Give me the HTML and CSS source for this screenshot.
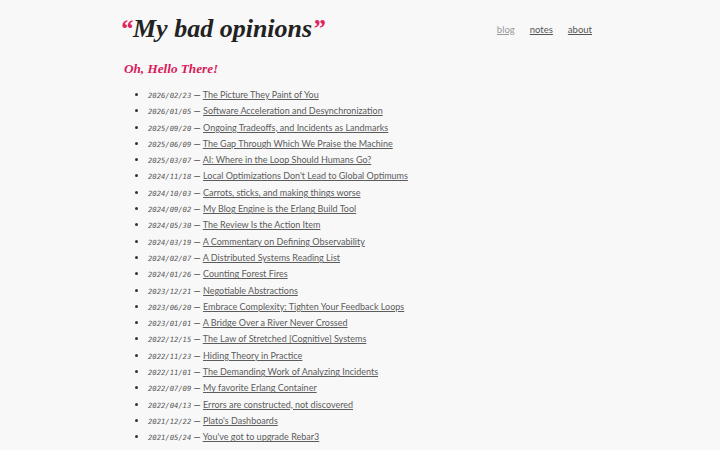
FILE: index.html
```html
<!DOCTYPE html>
<html>
<head>
<meta charset="utf-8">
<link rel="stylesheet" href="styles.css">
</head>
<body>
<div class="page">
  <header class="header">
    <h1 class="title"><span class="quote">“</span>My bad opinions<span class="quote">”</span></h1>
    <nav class="nav">
      <a class="nav-link current" href="#">blog</a>
      <a class="nav-link" href="#">notes</a>
      <a class="nav-link" href="#">about</a>
    </nav>
  </header>
  <main class="main">
    <h2 class="hello">Oh, Hello There!</h2>
    <ul class="posts">
      <li><span class="date">2026/02/23</span> — <a href="#">The Picture They Paint of You</a></li>
      <li><span class="date">2026/01/05</span> — <a href="#">Software Acceleration and Desynchronization</a></li>
      <li><span class="date">2025/09/20</span> — <a href="#">Ongoing Tradeoffs, and Incidents as Landmarks</a></li>
      <li><span class="date">2025/06/09</span> — <a href="#">The Gap Through Which We Praise the Machine</a></li>
      <li><span class="date">2025/03/07</span> — <a href="#">AI: Where in the Loop Should Humans Go?</a></li>
      <li><span class="date">2024/11/18</span> — <a href="#">Local Optimizations Don't Lead to Global Optimums</a></li>
      <li><span class="date">2024/10/03</span> — <a href="#">Carrots, sticks, and making things worse</a></li>
      <li><span class="date">2024/09/02</span> — <a href="#">My Blog Engine is the Erlang Build Tool</a></li>
      <li><span class="date">2024/05/30</span> — <a href="#">The Review Is the Action Item</a></li>
      <li><span class="date">2024/03/19</span> — <a href="#">A Commentary on Defining Observability</a></li>
      <li><span class="date">2024/02/07</span> — <a href="#">A Distributed Systems Reading List</a></li>
      <li><span class="date">2024/01/26</span> — <a href="#">Counting Forest Fires</a></li>
      <li><span class="date">2023/12/21</span> — <a href="#">Negotiable Abstractions</a></li>
      <li><span class="date">2023/06/20</span> — <a href="#">Embrace Complexity; Tighten Your Feedback Loops</a></li>
      <li><span class="date">2023/01/01</span> — <a href="#">A Bridge Over a River Never Crossed</a></li>
      <li><span class="date">2022/12/15</span> — <a href="#">The Law of Stretched [Cognitive] Systems</a></li>
      <li><span class="date">2022/11/23</span> — <a href="#">Hiding Theory in Practice</a></li>
      <li><span class="date">2022/11/01</span> — <a href="#">The Demanding Work of Analyzing Incidents</a></li>
      <li><span class="date">2022/07/09</span> — <a href="#">My favorite Erlang Container</a></li>
      <li><span class="date">2022/04/13</span> — <a href="#">Errors are constructed, not discovered</a></li>
      <li><span class="date">2021/12/22</span> — <a href="#">Plato's Dashboards</a></li>
      <li><span class="date">2021/05/24</span> — <a href="#">You've got to upgrade Rebar3</a></li>
    </ul>
  </main>
</div>
</body>
</html>
```
FILE: styles.css
```css
html, body {
  margin: 0;
  padding: 0;
  background: #f8f8f8;
}
body {
  font-family: Lato, "Open Sans", sans-serif;
  color: #555;
}
.page {
  width: 480px;
  margin: 0 auto;
}
.header {
  display: flex;
  justify-content: space-between;
  align-items: center;
  padding-top: 13px;
  height: 32px;
}
.title {
  margin: 0;
  font-family: "Liberation Serif", "DejaVu Serif", serif;
  font-style: italic;
  font-weight: bold;
  font-size: 26px;
  line-height: 32px;
  color: #222;
}
.quote {
  color: #e0245e;
}
.nav {
  display: flex;
  gap: 15px;
  padding-right: 8px;
  font-size: 9.5px;
}
.nav-link {
  color: #555;
}
.nav-link.current {
  color: #999;
}
.main {
  padding-left: 4px;
}
.hello {
  margin: 14px 0 8px;
  font-family: "Liberation Serif", "DejaVu Serif", serif;
  font-style: italic;
  font-weight: bold;
  font-size: 13.2px;
  line-height: 20px;
  color: #d81b5a;
}
.posts {
  margin: 0;
  padding-left: 24px;
  font-size: 9px;
}
.posts li {
  height: 16.3px;
  line-height: 16px;
  color: #333;
}
.date {
  font-family: "DejaVu Sans Mono", monospace;
  font-style: italic;
  font-size: 7.2px;
  color: #555;
}
.posts a {
  color: #5c5c5c;
}
```
